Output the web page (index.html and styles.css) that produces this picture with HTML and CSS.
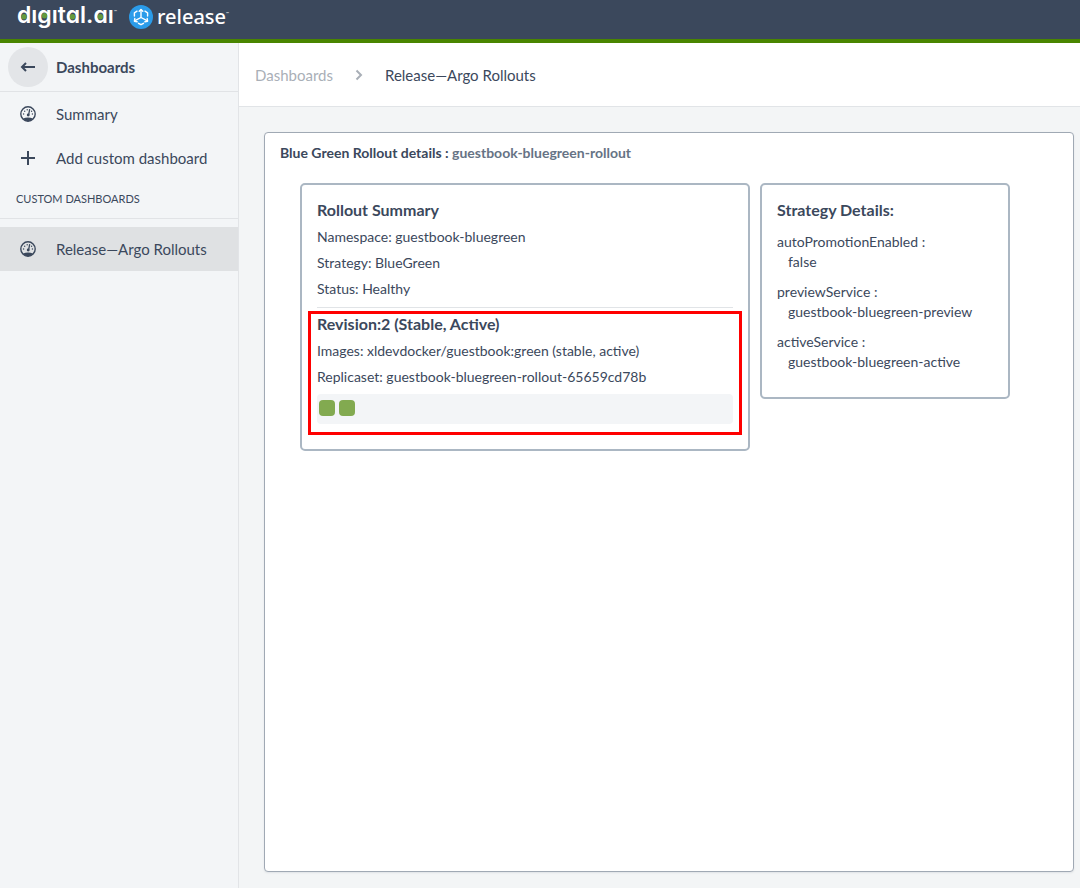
FILE: index.html
```html
<!DOCTYPE html>
<html lang="en">
<head>
<meta charset="utf-8">
<meta name="viewport" content="width=device-width, initial-scale=1">
<title>Release—Argo Rollouts</title>
<link rel="stylesheet" href="styles.css">
</head>
<body>
<svg class="defs" aria-hidden="true">
  <symbol id="gauge" viewBox="0 0 16 16">
    <circle cx="8" cy="8" r="7.2" fill="none" stroke="currentColor" stroke-width="1.4"/>
    <path d="M3 12.6Q8 10.600 13 12.600Q11.200 15.200 8 15.200T3 12.600Z" fill="currentColor"/>
    <path d="M9.600 3.600 8.600 9" fill="none" stroke="currentColor" stroke-width="1.3" stroke-linecap="round"/>
    <circle cx="8.200" cy="9" r="1.400" fill="currentColor"/>
    <g fill="currentColor"><circle cx="3.600" cy="8" r=".7"/><circle cx="4.700" cy="5.300" r=".7"/><circle cx="7.200" cy="3.800" r=".7"/><circle cx="11.600" cy="5.300" r=".7"/><circle cx="12.400" cy="8" r=".7"/></g>
  </symbol>
</svg>
<header class="topbar">
  <a class="brand" href="#">
    <svg class="brand-logo" width="216" height="32" viewBox="0 0 216 32">
      <text class="wordmark" x="0" y="23">digital.ai</text>
      <g class="dot-mask"><rect x="15" y="2" width="5" height="8"/><rect x="35" y="2" width="5" height="8"/><rect x="91" y="2" width="6" height="8"/></g>
      <g class="wordmark-dots"><circle cx="7" cy="16.800" r="2.700"/><circle cx="27.500" cy="15.800" r="2.700"/><circle cx="55.500" cy="16.800" r="2.700"/><circle cx="83.300" cy="16.800" r="2.700"/></g>
      <text class="tm" x="97" y="13">™</text>
      <circle cx="124" cy="17" r="12" fill="#2b9cea"/>
      <g fill="none" stroke="#fff" stroke-width="1.4" stroke-linecap="round" stroke-linejoin="round">
        <path d="M124 17.500V10M124 17.500l-6 3.200M124 17.500l6 3.200"/>
        <path d="M122.200 11.200l1.800-1.800 1.800 1.800M117.800 18.500l-.4 2.700 2.700.6M130.200 18.500l.4 2.700-2.700.6"/>
        <path d="M120 11.200l-2.600 1.600v3.200M128 11.200l2.600 1.600v3.200M121.500 23.300l2.500 1.400 2.500-1.400"/>
      </g>
      <text class="product" x="140" y="24">release</text>
      <text class="tm" x="209" y="15">™</text>
    </svg>
  </a>
</header>
<div class="shell">
  <nav class="sidebar">
    <div class="sidebar-head">
      <button class="back" type="button" aria-label="Back">
        <svg width="16" height="12" viewBox="0 0 16 12"><path d="M15 6H2M6 2 2 6l4 4" fill="none" stroke="currentColor" stroke-width="2"/></svg>
      </button>
      <span class="sidebar-title">Dashboards</span>
    </div>
    <a class="nav-item" href="#"><svg class="icon"><use href="#gauge"/></svg>Summary</a>
    <a class="nav-item" href="#"><svg class="icon" viewBox="0 0 16 16"><path d="M8 1v14M1 8h14" stroke="currentColor" stroke-width="2"/></svg>Add custom dashboard</a>
    <h2 class="nav-label">CUSTOM DASHBOARDS</h2>
    <a class="nav-item nav-item-active" href="#"><svg class="icon"><use href="#gauge"/></svg>Release—Argo Rollouts</a>
  </nav>
  <div class="content">
    <div class="breadcrumbs">
      <a class="crumb-link" href="#">Dashboards</a>
      <svg class="chevron" width="8" height="12" viewBox="0 0 8 12"><path d="M1.500 1.500 6 6l-4.500 4.500" fill="none" stroke="currentColor" stroke-width="2"/></svg>
      <span>Release—Argo Rollouts</span>
    </div>
    <main class="panel">
      <h1 class="panel-title">Blue Green Rollout details : <span class="rollout-name">guestbook-bluegreen-rollout</span></h1>
      <div class="cards">
        <section class="card summary">
          <h2 class="card-title">Rollout Summary</h2>
          <p class="row">Namespace: guestbook-bluegreen</p>
          <p class="row">Strategy: BlueGreen</p>
          <p class="row">Status: Healthy</p>
          <div class="revision">
            <h2 class="card-title">Revision:2 (Stable, Active)</h2>
            <p class="row">Images: xldevdocker/guestbook:green (stable, active)</p>
            <p class="row">Replicaset: guestbook-bluegreen-rollout-65659cd78b</p>
            <div class="pods"><span class="pod"></span><span class="pod"></span></div>
          </div>
        </section>
        <section class="card strategy">
          <h2 class="card-title">Strategy Details:</h2>
          <dl class="details">
            <dt>autoPromotionEnabled :</dt><dd>false</dd>
            <dt>previewService :</dt><dd>guestbook-bluegreen-preview</dd>
            <dt>activeService :</dt><dd>guestbook-bluegreen-active</dd>
          </dl>
        </section>
      </div>
    </main>
  </div>
</div>
</body>
</html>
```
FILE: styles.css
```css
* { box-sizing: border-box; }
body {
  margin: 0;
  min-height: 100vh;
  display: flex;
  flex-direction: column;
  background: #f3f5f6;
  color: #3b485c;
  font: 14px/20px Lato, "Liberation Sans", sans-serif;
}
h1, h2, p, dl, dd { margin: 0; }
a { color: inherit; text-decoration: none; }
.defs { position: absolute; width: 0; height: 0; }

.topbar { height: 43px; padding-left: 17px; background: #3b485c; border-bottom: 4px solid #498500; }
.brand, .brand-logo { display: block; }
.brand-logo { fill: #fff; }
.wordmark { font: 600 23px Inter, sans-serif; font-feature-settings: "cv11"; }
.dot-mask { fill: #3b485c; }
.wordmark-dots { fill: #649a3d; }
.product { font: 500 20px "Noto Sans", sans-serif; }
.tm { font: 4px Lato, sans-serif; }

.shell { flex: 1; display: flex; }
.sidebar { flex: 0 0 239px; border-right: 1px solid #e2e4e7; background: #f3f5f7; font-size: 15px; }
.sidebar-head { display: flex; align-items: center; gap: 8px; height: 49px; padding: 0 8px; border-bottom: 1px solid #e1e3e6; }
.back {
  display: grid;
  place-items: center;
  width: 40px;
  height: 40px;
  padding: 0;
  border: 0;
  border-radius: 50%;
  background: #e3e5e8;
  color: inherit;
}
.sidebar-title { font-weight: 700; }
.nav-item { display: flex; align-items: center; gap: 20px; height: 44px; padding: 0 20px; white-space: nowrap; }
.nav-item-active { background: #dfe1e3; }
.icon { flex: none; width: 16px; height: 16px; }
.nav-label {
  height: 39px;
  margin-bottom: 8px;
  padding: 9px 16px;
  border-bottom: 1px solid #e1e3e6;
  font-size: 11px;
  font-weight: 400;
}

.content { flex: 1; min-width: 0; display: flex; flex-direction: column; }
.breadcrumbs {
  display: flex;
  align-items: center;
  gap: 22px;
  height: 64px;
  padding: 0 16px;
  background: #fff;
  border-bottom: 1px solid #e1e4e7;
  font-size: 15px;
}
.crumb-link, .chevron { color: #a9afb7; }

.panel {
  flex: 1;
  margin: 25px 6px 16px 25px;
  padding: 10px 15px;
  border: 1px solid #a0a9b4;
  border-radius: 4px;
  background: #fff;
  box-shadow: 0 1px 2px #dfe2e6;
}
.panel-title { font-size: 14px; font-weight: 700; }
.rollout-name { color: #667385; }
.cards { display: flex; align-items: flex-start; gap: 10px; padding: 20px; }
.card { padding: 15px; border: 2px solid #abb7c3; border-radius: 5px; }
.summary { flex: 0 1 450px; }
.strategy { flex: 0 1 250px; }
.card-title { font-size: 16px; line-height: 20px; font-weight: 700; margin-bottom: 4px; }
.row { padding: 3px 0; }

.revision { position: relative; margin-top: 5px; padding: 6px 0 10px; border-top: 1px solid #e1e4e7; }
.revision::after { content: ""; position: absolute; inset: 3px -9px -1px; border: 3px solid #f00; }
.pods { display: flex; gap: 4px; height: 30px; margin-top: 4px; padding: 6px 2px; border-radius: 4px; background: #f3f5f7; }
.pod { width: 16px; height: 16px; border-radius: 4px; background: #82aa50; }

.details { padding-top: 8px; }
.details dd { margin: 0 0 10px; padding-left: 11px; }
```
